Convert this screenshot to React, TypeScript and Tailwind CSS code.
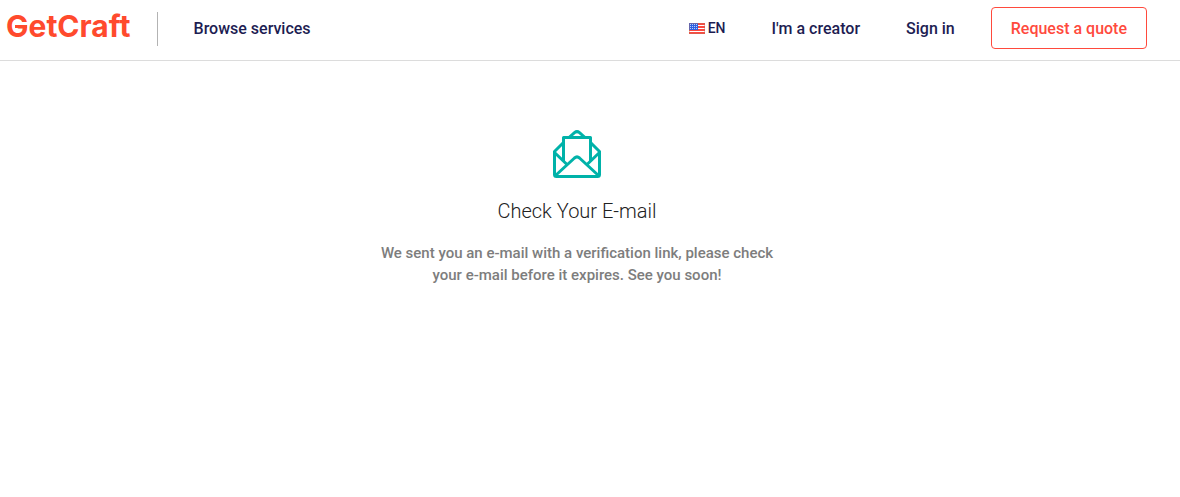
const links = [
  { label: "I'm a creator", href: "#creator" },
  { label: "Sign in", href: "#sign-in" },
];

function Logo() {
  return (
    <a
      href="#home"
      aria-label="GetCraft"
      className="relative pb-1 font-['Inter',sans-serif] text-[30px] leading-8 font-bold text-[#ff4a2d]"
    >
      GetCraft
      <span aria-hidden className="absolute top-[15px] left-[9px] h-[3px] w-3 bg-[#ff4a2d]" />
    </a>
  );
}

function Flag() {
  return (
    <svg viewBox="0 0 16 11" className="h-[11px] w-4" aria-hidden>
      <rect width="16" height="11" fill="#fff" />
      {[0, 3, 6, 9].map((y) => (
        <rect key={y} y={y} width="16" height="2" fill="#fb4a40" />
      ))}
      <rect width="9" height="7" fill="#2f5fe0" />
      {[1, 3, 5].map((y) =>
        [1, 3, 5, 7].map((x) => (
          <rect key={`${x}-${y}`} x={x} y={y} width="1" height="1" fill="#b9cdf8" />
        ))
      )}
      <rect x="0.5" y="0.5" width="15" height="10" fill="none" stroke="#b8705c" strokeOpacity="0.4" />
    </svg>
  );
}

function Envelope() {
  return (
    <svg
      viewBox="0 0 48 48"
      className="size-12"
      fill="none"
      stroke="#00b2a9"
      strokeWidth="3"
      strokeLinejoin="round"
      aria-hidden
    >
      <path d="M10.5 12.5 L1.5 21.5 V44.5 Q1.5 46.5 3.5 46.5 H44.5 Q46.5 46.5 46.5 44.5 V21.5 L37.5 12.5" />
      <path d="M16 7.5 L21.5 2.6 Q24 0.6 26.5 2.6 L32 7.5" />
      <path d="M10.5 31 V7.5 H37.5 V31" />
      <path d="M1.5 22.5 L14 34.5 M46.5 22.5 L34 34.5" />
      <path d="M2.5 45.5 L21.5 28 Q24 25.8 26.5 28 L45.5 45.5" />
    </svg>
  );
}

export default function App() {
  return (
    <div className="bg-white font-['Roboto',sans-serif]">
      <header className="flex items-center justify-between border-b border-[#dcdcdc] pt-[7px] pr-[33px] pb-[11px] pl-1.5 text-base font-medium text-[#1d1d52]">
        <div className="flex items-center">
          <Logo />
          <span aria-hidden className="mt-0.5 ml-[26px] h-[34px] w-px bg-[#b3b3b3]" />
          <a href="#services" className="ml-9 pt-0.5">
            Browse services
          </a>
        </div>

        <nav className="flex items-center">
          <button type="button" className="flex items-center gap-[3px] text-sm">
            <Flag />
            EN
          </button>
          {links.map((l) => (
            <a key={l.label} href={l.href} className="ml-[46px] pt-0.5">
              {l.label}
            </a>
          ))}
          <button
            type="button"
            className="ml-9 h-[42px] rounded border border-[#ff4a3d] px-[19px] pt-0.5 text-[#ff4a3d]"
          >
            Request a quote
          </button>
        </nav>
      </header>

      <main className="flex flex-col items-center pt-[69px] pr-[26px] text-center">
        <Envelope />
        <h1 className="mt-[18px] text-xl leading-[30px] font-light text-[#212121]">Check Your E-mail</h1>
        <p className="mt-4 max-w-[420px] text-[15px] leading-[22px] font-medium text-[#7d7d7d]">
          We sent you an e-mail with a verification link, please check your e-mail before it expires. See you soon!
        </p>
      </main>
    </div>
  );
}
